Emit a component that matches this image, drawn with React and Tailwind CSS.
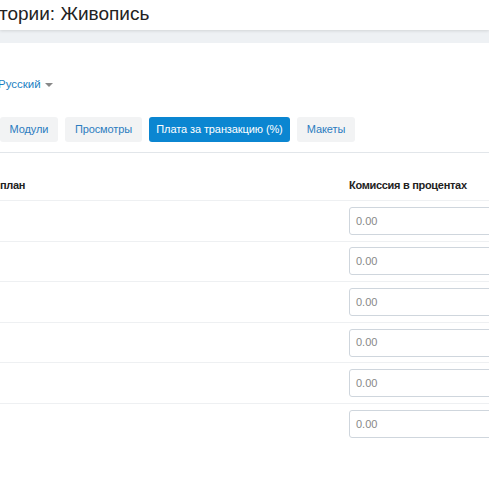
export default function App() {
  const rows = [0, 1, 2, 3, 4, 5]
  const tabs = [
    { label: 'Модули', w: 'w-[58px]' },
    { label: 'Просмотры', w: 'w-[77px]' },
    { label: 'Плата за транзакцию (%)', w: 'w-[141px]', active: true },
    { label: 'Макеты', w: 'w-[58px]' },
  ]

  return (
    <div className="h-[499px] w-[489px] overflow-hidden bg-white font-['Liberation_Sans',sans-serif] text-[#333]">
      <div className="relative z-10 h-[30px] bg-white shadow-[0_1px_3px_rgba(0,0,0,0.12)]">
        <h1 className="-ml-px pt-[2px] text-[19px] font-normal leading-[24px] text-[#222]">тории: Живопись</h1>
      </div>
      <div className="h-[13px] bg-[#eef1f4]" />

      <div className="mt-[34px] flex h-[16px] items-center">
        <span className="-ml-[2px] whitespace-nowrap text-[11.5px] leading-none text-[#1b7fc3]">Русский</span>
        <span className="ml-[4px] h-0 w-0 border-x-[4px] border-t-[4px] border-x-transparent border-t-[#888]" />
      </div>

      <div className="mt-[24px] flex gap-[7px]">
        {tabs.map((t) => (
          <div
            key={t.label}
            className={
              'flex h-[25px] items-center justify-center whitespace-nowrap rounded-[3px] text-[11px] tracking-[-0.1px] ' +
              t.w +
              (t.active ? ' bg-[#0b86d1] text-white' : ' bg-[#f2f3f4] text-[#2b7cc0]')
            }
          >
            {t.label}
          </div>
        ))}
      </div>

      <div className="mt-[10px] h-px bg-[#e2e6ea]" />

      <div className="mt-[24px] flex h-[23px] items-start text-[11px] font-bold tracking-[-0.3px] text-[#222]">
        <div className="flex-1">план</div>
        <div className="w-[140px] whitespace-nowrap">Комиссия в процентах</div>
      </div>

      {rows.map((r) => (
        <div key={r} className="flex h-[40.6px] items-center border-t border-[#eef0f2]">
          <div className="flex-1" />
          <div className="w-[140px]">
            <div className="flex h-[28px] w-[160px] items-center rounded-[3px] border border-[#cfd6dd] pl-[6px] text-[11px] text-[#888]">
              0.00
            </div>
          </div>
        </div>
      ))}
    </div>
  )
}
